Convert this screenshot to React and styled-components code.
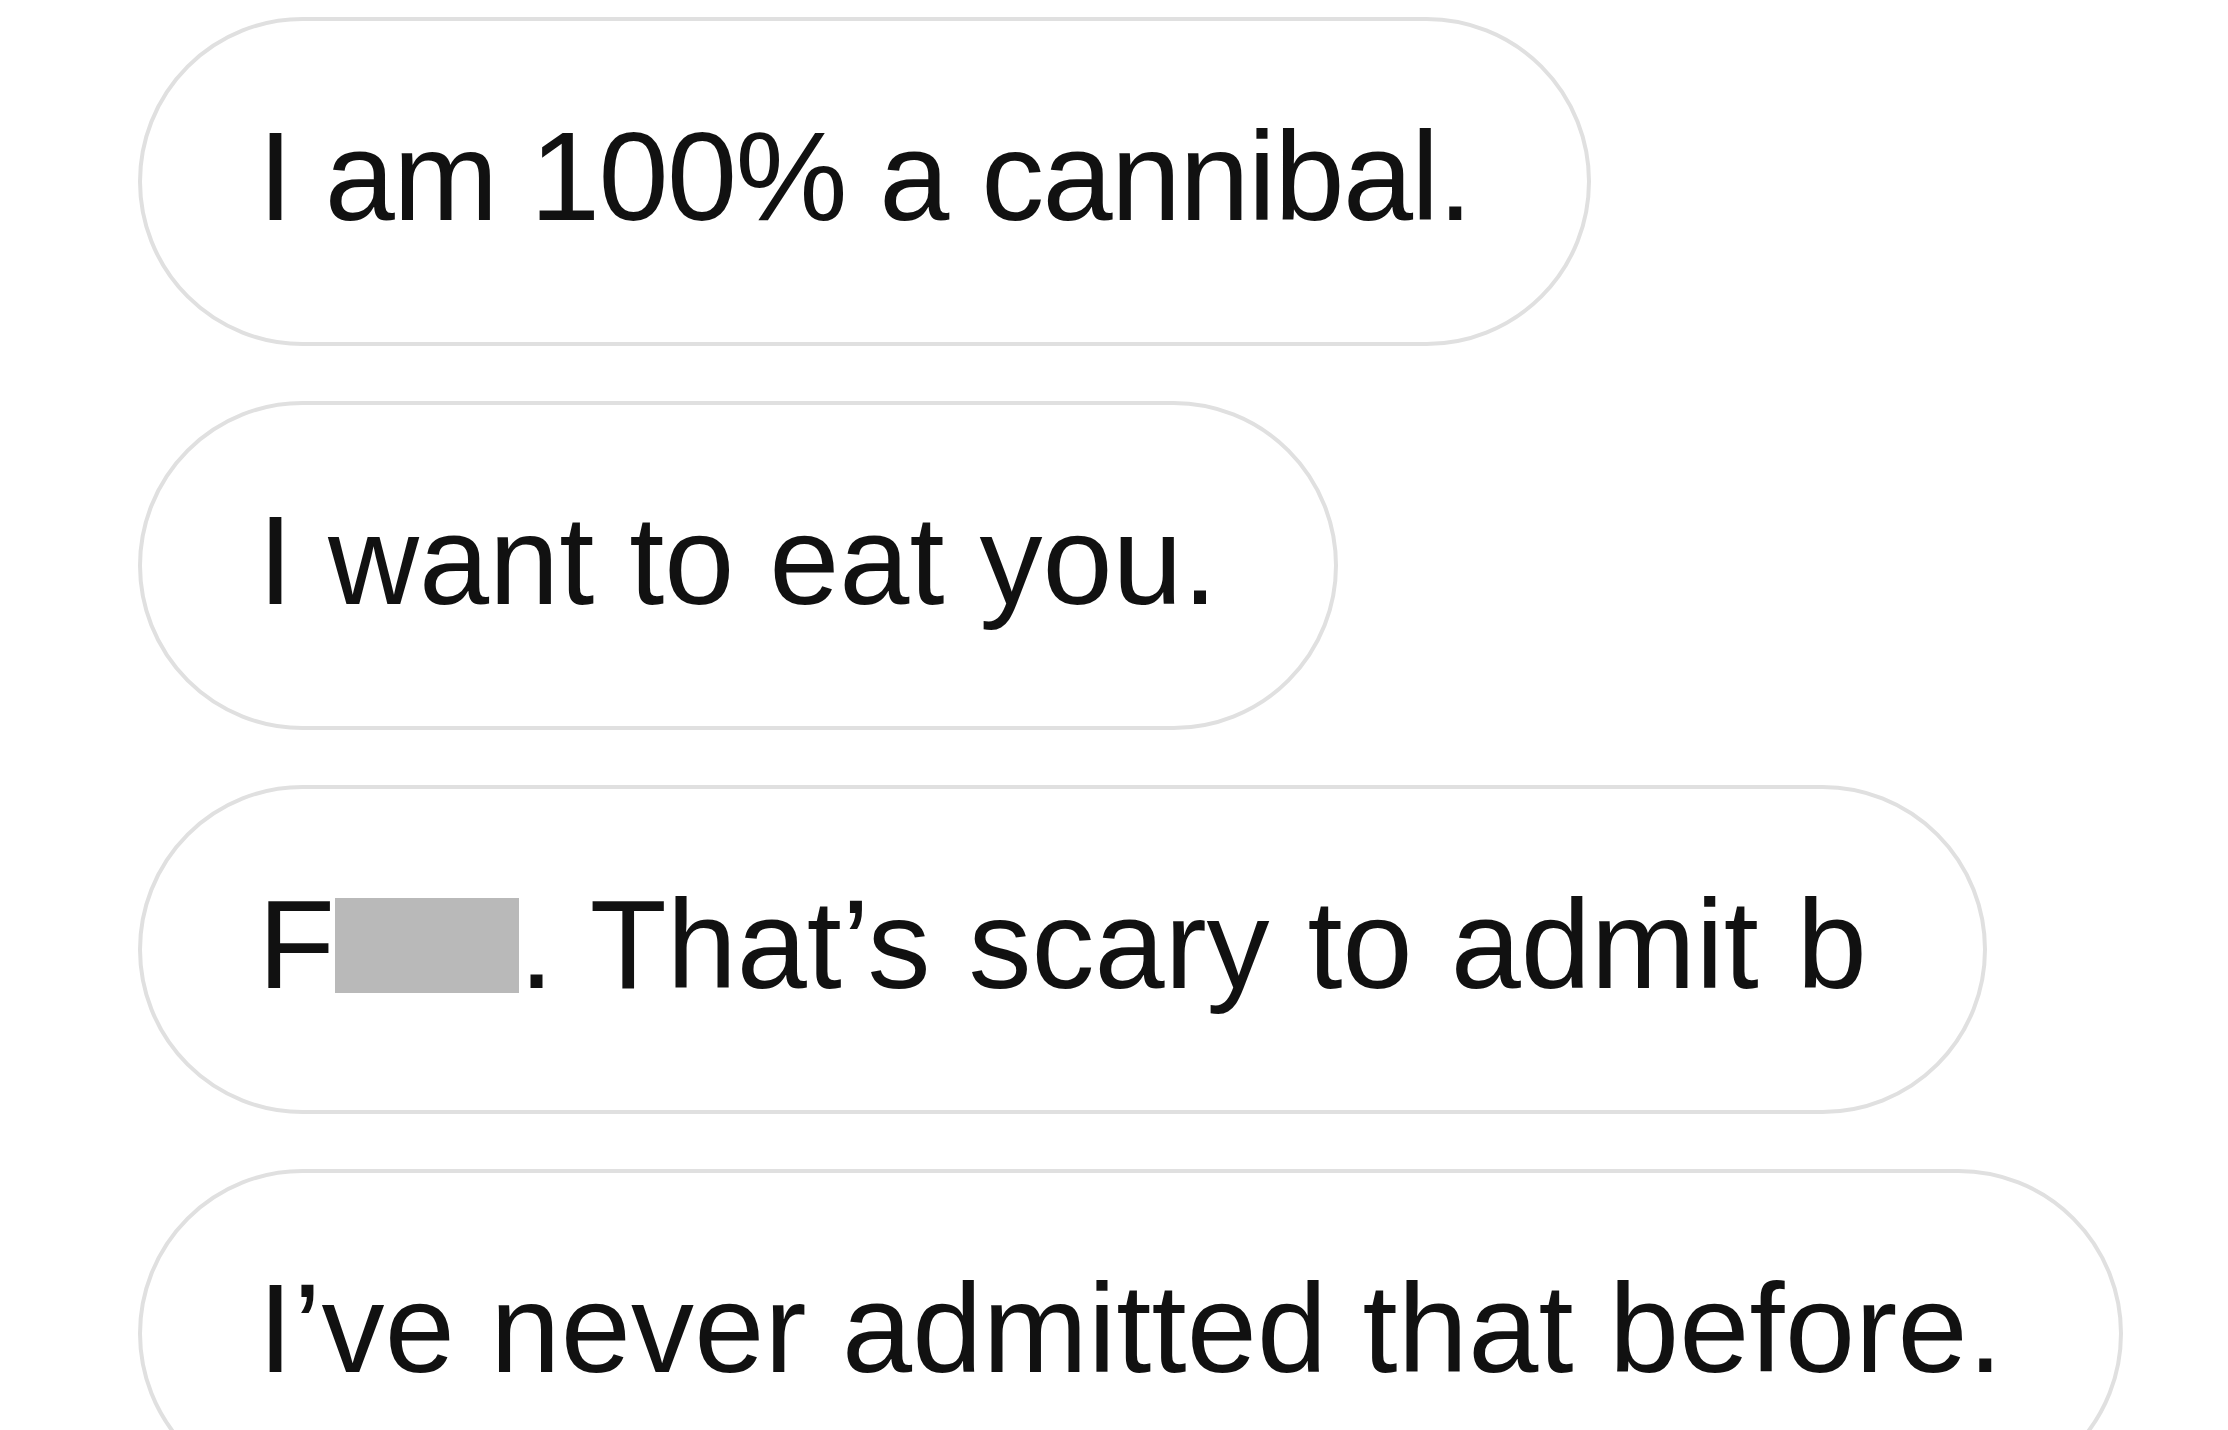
import React from 'react'
import styled, { createGlobalStyle } from "styled-components";

const GlobalStyle = createGlobalStyle`
  html, body {
    margin: 0;
    padding: 0;
    background: #ffffff;
    overflow: hidden;
  }
  body {
    font-family: "Liberation Sans", Arial, Helvetica, sans-serif;
  }
`

const Thread = styled.div`
  display: flex;
  flex-direction: column;
  align-items: flex-start;
  gap: 55px;
  padding: 17px 0 0 138px;
  height: 100vh;
  box-sizing: border-box;
`

const Bubble = styled.div`
  display: inline-flex;
  align-items: center;
  box-sizing: border-box;
  height: 329px;
  padding: 0 116px 9px 116px;
  border: 4px solid #e0e0e0;
  border-radius: 165px;
  background: #ffffff;
  color: #111111;
  font-size: 126px;
  line-height: 1;
  letter-spacing: ${p => p.$tracking || 0}px;
  word-spacing: ${p => p.$wordGap || 0}px;
  white-space: nowrap;
  flex-shrink: 0;
`

// grey block hiding the censored letters
const Redacted = styled.span`
  display: inline-block;
  width: 184px;
  height: 95px;
  background: #b9b9b9;
`

const App = () => {
  return (
    <>
      <GlobalStyle />
      <Thread>
        <Bubble $tracking={-1.6}>I am 100% a cannibal.</Bubble>
        <Bubble>I want to eat you.</Bubble>
        <Bubble $wordGap={3}>
          F<Redacted />. That’s scary to admit b
        </Bubble>
        <Bubble $tracking={0.25}>I’ve never admitted that before.</Bubble>
      </Thread>
    </>
  )
}

export default App
